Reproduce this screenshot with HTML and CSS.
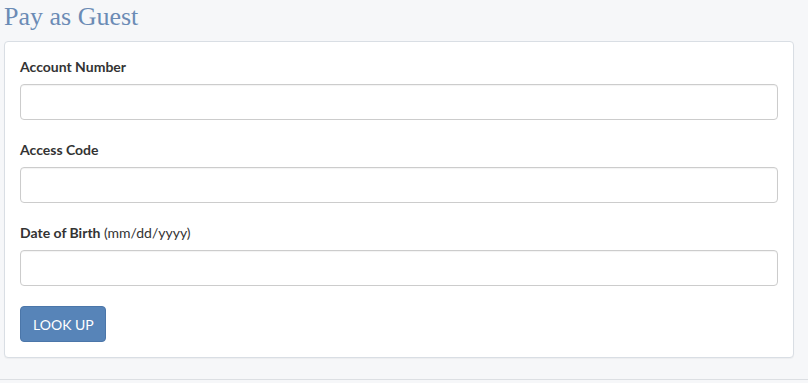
FILE: index.html
```html
<!DOCTYPE html>
<html lang="en">
<head>
  <meta charset="UTF-8">
  <meta name="viewport" content="width=device-width, initial-scale=1.0">
  <title>Pay as Guest</title>
  <link rel="stylesheet" href="styles.css">
</head>
<body>
  <div class="guest-wrap">
    <h1 class="page-title">Pay as Guest</h1>

    <div class="guest-card">
      <form id="guestForm">
        <div class="form-group">
          <label for="account">Account Number</label>
          <input type="text" id="account">
        </div>
        <div class="form-group">
          <label for="access">Access Code</label>
          <input type="text" id="access">
        </div>
        <div class="form-group">
          <label for="dob">Date of Birth <span class="hint">(mm/dd/yyyy)</span></label>
          <input type="text" id="dob">
        </div>
        <button type="button" class="btn-lookup">LOOK UP</button>
      </form>
    </div>
  </div>
  <hr class="page-rule">
</body>
</html>
```

FILE: styles.css
```css
* {
  margin: 0;
  padding: 0;
  box-sizing: border-box;
}

body {
  font-family: Lato, "Open Sans", Arial, sans-serif;
  background-color: #f6f7f9;
  color: #333;
}

.guest-wrap {
  width: 790px;
  margin-left: 4px;
}

.page-title {
  font-family: "Liberation Serif", "Times New Roman", serif;
  font-weight: normal;
  font-size: 26px;
  line-height: 30px;
  padding: 2px 0 0 0;
  margin-bottom: 9px;
  color: #6b8bb5;
}

.guest-card {
  background-color: white;
  border: 1px solid #d9dee4;
  border-radius: 4px;
  padding: 15px;
  box-shadow: 0 1px 1px rgba(0, 0, 0, 0.04);
}

.form-group {
  margin-bottom: 20px;
}

label {
  display: block;
  font-size: 14px;
  font-weight: bold;
  line-height: 20px;
  margin-bottom: 7px;
}

label .hint {
  font-weight: normal;
}

input {
  display: block;
  width: 100%;
  height: 36px;
  padding: 6px 10px;
  border: 1px solid #ccc;
  border-radius: 4px;
  background: white;
  box-shadow: inset 0 1px 1px rgba(0, 0, 0, 0.05);
  font-family: inherit;
  font-size: 14px;
}

.btn-lookup {
  display: block;
  height: 36px;
  padding: 0 11px 0 12px;
  background-color: #5784b8;
  border: 1px solid #4b76a9;
  border-radius: 4px;
  color: white;
  font-family: inherit;
  font-size: 14px;
  cursor: pointer;
}

.page-rule {
  border: none;
  border-top: 1px solid #dcdfe3;
  margin-top: 21px;
}
```
